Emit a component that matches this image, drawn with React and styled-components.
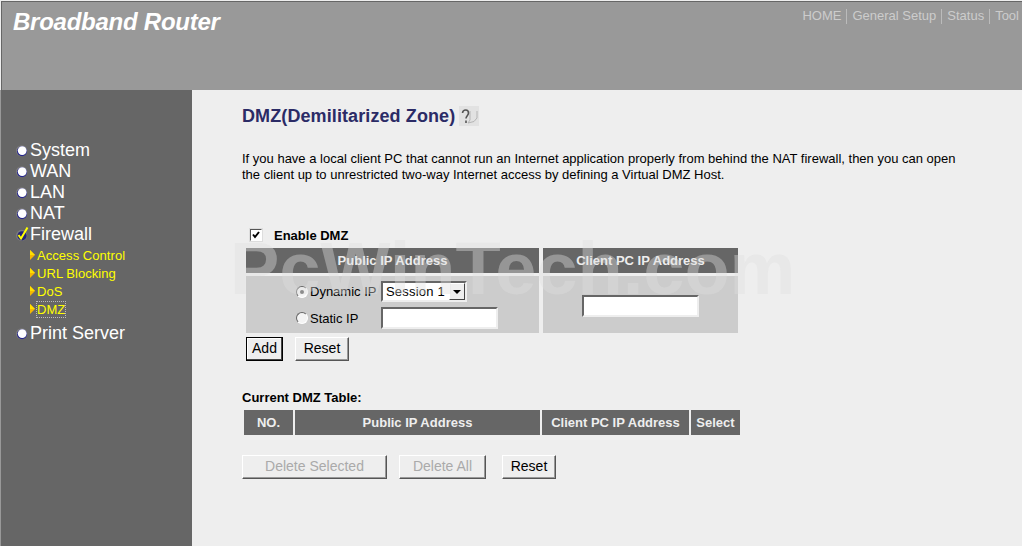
import React from 'react'
import styled, { createGlobalStyle } from 'styled-components'

const Global = createGlobalStyle`
  html, body {
    margin: 0;
    padding: 0;
    height: 100%;
    overflow: hidden;
    background: #eee;
  }
  #root {
    height: 100%;
  }
`

const Page = styled.div`
  position: relative;
  display: flex;
  flex-direction: column;
  width: 1022px;
  height: 546px;
  overflow: hidden;
  font-family: "Liberation Sans", Arial, sans-serif;
  color: #000;
`

const Header = styled.header`
  display: flex;
  justify-content: space-between;
  align-items: flex-start;
  box-sizing: border-box;
  height: 90px;
  flex: none;
  background: #999;
  border-top: 1px solid #eee;
  border-left: 1px solid #eee;
  box-shadow: inset 1px 1px 0 #666;
`

const Brand = styled.h1`
  margin: 6px 0 0 12px;
  font-size: 24px;
  line-height: 30px;
  font-style: italic;
  font-weight: bold;
  letter-spacing: -0.25px;
  color: #fff;
`

const TopNav = styled.nav`
  display: flex;
  align-items: center;
  margin: 7px 3px 0 0;
  font-size: 13px;
  line-height: 16px;
  color: #ccc;
`

const TopSep = styled.span`
  width: 1px;
  height: 15px;
  margin: 0 5px;
  background: #bbb;
`

const Body = styled.div`
  display: flex;
  flex: 1;
  min-height: 0;
`

const Side = styled.aside`
  box-sizing: border-box;
  width: 192px;
  flex: none;
  padding: 50px 0 0 15px;
  background: #666;
  border-left: 1px solid #999;
`

const NavItem = styled.div`
  display: flex;
  align-items: center;
  gap: 2px;
  height: 21px;
  font-size: 18px;
  color: #fff;
`

const SubList = styled.div`
  padding: 1px 0 5px 14px;
`

const SubItem = styled.div`
  display: flex;
  align-items: center;
  gap: 2px;
  height: 18px;
  font-size: 13px;
  letter-spacing: 0.05px;
  color: #ff0;
`

const SubLabel = styled.span`
  outline: ${p => (p.$focus ? '1px dotted #bbb' : 'none')};
`

const Main = styled.main`
  flex: 1;
  min-width: 0;
  padding: 0 0 0 50px;
  background: #eee;
`

const Title = styled.h2`
  display: flex;
  align-items: center;
  gap: 4px;
  margin: 15px 0 0;
  font-size: 18px;
  line-height: 22px;
  font-weight: bold;
  letter-spacing: 0.1px;
  color: #2b2b66;
`

const Intro = styled.p`
  width: 725px;
  margin: 24px 0 0;
  font-size: 13px;
  line-height: 16px;
`

const EnableRow = styled.label`
  display: flex;
  align-items: center;
  gap: 12px;
  margin: 42px 0 0 8px;
  height: 20px;
  font-size: 13px;
  font-weight: bold;
`

const CheckBox = styled.span`
  display: flex;
  align-items: center;
  justify-content: center;
  box-sizing: border-box;
  width: 12px;
  height: 12px;
  background: #fff;
  border: 1px solid;
  border-color: #555 #fff #fff #555;
  box-shadow: 0 0 0 1px #ddd;
`

const FormGrid = styled.div`
  display: grid;
  grid-template-columns: 293px 195px;
  column-gap: 4px;
  margin: 3px 0 0 4px;
  width: 492px;
`

const HeadCell = styled.div`
  height: 25px;
  line-height: 25px;
  text-align: center;
  font-size: 13px;
  font-weight: bold;
  color: #eee;
  background: #666;
  border-bottom: 3px solid #eee;
`

const BodyCell = styled.div`
  display: flex;
  flex-direction: column;
  align-items: ${p => (p.$center ? 'center' : 'flex-start')};
  gap: 5px;
  box-sizing: border-box;
  height: 57px;
  padding: ${p => (p.$center ? '19px 0 0' : '5px 0 0 50px')};
  background: #ccc;
`

const RadioRow = styled.div`
  display: flex;
  align-items: center;
  font-size: 13px;
`

const Radio = styled.span`
  display: flex;
  align-items: center;
  justify-content: center;
  box-sizing: border-box;
  width: 12px;
  height: 12px;
  margin-right: 2px;
  border-radius: 50%;
  background: #f4f4f4;
  border: 1px solid;
  border-color: #666 #fff #fff #666;
`

const RadioDot = styled.span`
  width: 4px;
  height: 4px;
  border-radius: 50%;
  background: #555;
`

const RadioLabel = styled.span`
  width: 71px;
  white-space: nowrap;
`

const TextBox = styled.div`
  box-sizing: border-box;
  width: 117px;
  height: 22px;
  background: #fff;
  border: 2px solid;
  border-color: #666 #eee #eee #666;
`

const SelectBox = styled.div`
  display: flex;
  align-items: center;
  justify-content: space-between;
  box-sizing: border-box;
  width: 86px;
  height: 21px;
  padding: 0 0 0 3px;
  background: #fff;
  border: 2px solid;
  border-color: #666 #eee #eee #666;
  font-size: 13px;
  letter-spacing: 0.2px;
`

const SelectArrow = styled.span`
  display: flex;
  align-items: center;
  justify-content: center;
  box-sizing: border-box;
  width: 16px;
  height: 17px;
  background: #eee;
  border: 1px solid;
  border-color: #fff #444 #444 #fff;
`

const ArrowGlyph = styled.span`
  width: 0;
  height: 0;
  border-left: 4px solid transparent;
  border-right: 4px solid transparent;
  border-top: 4px solid #000;
`

const Buttons = styled.div`
  display: flex;
  gap: ${p => p.$gap || 12}px;
  margin: ${p => p.$margin};
`

const Button = styled.button`
  box-sizing: border-box;
  width: ${p => p.$w}px;
  margin-right: ${p => p.$after || 0}px;
  height: 24px;
  padding: 0 0 2px;
  font-family: inherit;
  font-size: 14px;
  color: ${p => (p.disabled ? '#aaa' : '#000')};
  background: #eee;
  border: 1px solid;
  border-color: ${p => (p.$primary ? '#000' : '#fff #555 #555 #fff')};
  box-shadow: ${p => (p.$primary ? 'inset -1px -1px 0 #444, inset 1px 1px 0 #fff' : 'inset -1px -1px 0 #999')};
`

const TableLabel = styled.div`
  margin: 28px 0 0;
  height: 21px;
  line-height: 18px;
  font-size: 13px;
  font-weight: bold;
`

const DmzTable = styled.div`
  display: grid;
  grid-template-columns: 49px 245px 147px 49px;
  column-gap: 2px;
  width: 496px;
  margin-left: 2px;
`

const TableHead = styled.div`
  height: 25px;
  line-height: 25px;
  text-align: center;
  font-size: 13px;
  font-weight: bold;
  color: #eee;
  background: #666;
`

const Watermark = styled.div`
  position: absolute;
  left: 230px;
  top: 229px;
  font-size: 74px;
  line-height: 80px;
  font-weight: bold;
  white-space: nowrap;
  color: rgba(222, 222, 222, 0.4);
  pointer-events: none;
`

const Bullet = () => (
  <svg width="12" height="12" viewBox="0 0 12 12">
    <circle cx="5.6" cy="5.8" r="5.6" fill="#7c7c7c" />
    <circle cx="6" cy="6.2" r="5" fill="#26268c" />
    <circle cx="6.2" cy="5.6" r="4.4" fill="#fff" />
  </svg>
)

const CheckedBullet = () => (
  <svg width="12" height="12" viewBox="0 0 12 12" overflow="visible">
    <circle cx="5.6" cy="6.4" r="5.6" fill="#7c7c7c" />
    <circle cx="6" cy="6.8" r="4.6" fill="#22227a" />
    <path d="M2.5 6 L5 9.5 L11.5 -1.5" fill="none" stroke="#ff0" strokeWidth="2" />
  </svg>
)

const SubArrow = () => (
  <svg width="5" height="10" viewBox="0 0 5 10">
    <path d="M0 0 L5 5 L0 10 Z" fill="#f5b800" />
    <path d="M0 0 L5 5 L0 5 Z" fill="#ffe000" />
  </svg>
)

const HelpIcon = () => (
  <svg width="20" height="20" viewBox="0 0 20 20">
    <rect width="20" height="20" fill="#e2e2e2" />
    <path d="M9 17 L15 15.5 L18 12 L18 5 M11 5 L11 14 L9 17" fill="none" stroke="#b4b4b4" strokeWidth="1" />
    <path d="M3.5 7 C4 3 9.5 3 9.5 7 C9.5 9.5 7 10 7 12.5 M7 14.5 L7 17" fill="none" stroke="#555" strokeWidth="1.6" />
  </svg>
)

const Tick = () => (
  <svg width="8" height="8" viewBox="0 0 8 8">
    <path d="M1 3.5 L3 6 L7 1" fill="none" stroke="#000" strokeWidth="2" />
  </svg>
)

const navTop = ['System', 'WAN', 'LAN', 'NAT']
const navSub = ['Access Control', 'URL Blocking', 'DoS', 'DMZ']
const links = ['HOME', 'General Setup', 'Status', 'Tool']

export default function App() {
  return (
    <Page>
      <Global />
      <Header>
        <Brand>Broadband Router</Brand>
        <TopNav>
          {links.map((l, i) => (
            <React.Fragment key={l}>
              {i > 0 && <TopSep />}
              <span>{l}</span>
            </React.Fragment>
          ))}
        </TopNav>
      </Header>
      <Body>
        <Side>
          {navTop.map(n => (
            <NavItem key={n}><Bullet />{n}</NavItem>
          ))}
          <NavItem><CheckedBullet />Firewall</NavItem>
          <SubList>
            {navSub.map(n => (
              <SubItem key={n}>
                <SubArrow />
                <SubLabel $focus={n === 'DMZ'}>{n}</SubLabel>
              </SubItem>
            ))}
          </SubList>
          <NavItem><Bullet />Print Server</NavItem>
        </Side>
        <Main>
          <Title>DMZ(Demilitarized Zone) <HelpIcon /></Title>
          <Intro>
            If you have a local client PC that cannot run an Internet application properly from behind the NAT firewall, then you can open the client up to unrestricted two-way Internet access by defining a Virtual DMZ Host.
          </Intro>
          <EnableRow><CheckBox><Tick /></CheckBox>Enable DMZ</EnableRow>
          <FormGrid>
            <HeadCell>Public IP Address</HeadCell>
            <HeadCell>Client PC IP Address</HeadCell>
            <BodyCell>
              <RadioRow>
                <Radio><RadioDot /></Radio>
                <RadioLabel>Dynamic IP</RadioLabel>
                <SelectBox>
                  Session 1
                  <SelectArrow><ArrowGlyph /></SelectArrow>
                </SelectBox>
              </RadioRow>
              <RadioRow>
                <Radio />
                <RadioLabel>Static IP</RadioLabel>
                <TextBox />
              </RadioRow>
            </BodyCell>
            <BodyCell $center><TextBox /></BodyCell>
          </FormGrid>
          <Buttons $margin="4px 0 0 4px">
            <Button $w={37} $primary>Add</Button>
            <Button $w={54}>Reset</Button>
          </Buttons>
          <TableLabel>Current DMZ Table:</TableLabel>
          <DmzTable>
            <TableHead>NO.</TableHead>
            <TableHead>Public IP Address</TableHead>
            <TableHead>Client PC IP Address</TableHead>
            <TableHead>Select</TableHead>
          </DmzTable>
          <Buttons $margin="20px 0 0">
            <Button $w={145} disabled>Delete Selected</Button>
            <Button $w={87} $after={4} disabled>Delete All</Button>
            <Button $w={54}>Reset</Button>
          </Buttons>
        </Main>
      </Body>
      <Watermark>PcWinTech.com</Watermark>
    </Page>
  )
}
